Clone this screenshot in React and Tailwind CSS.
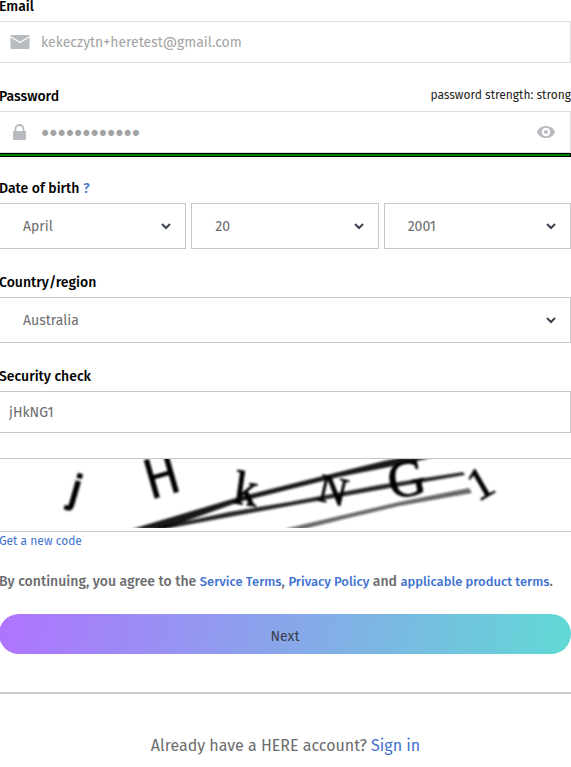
const labelText = "text-[14px] leading-5 font-medium text-black";
const linkText = "text-[#3f73d2]";

function Chevron() {
  return (
    <svg className="pointer-events-none absolute top-1/2 right-[15px] -mt-1 h-2 w-[10px]" viewBox="0 0 10 8" fill="none" aria-hidden="true">
      <path d="M1 2 L5 6 L9 2" stroke="#3b4250" strokeWidth="2" />
    </svg>
  );
}

function SelectBox({ id, label, value }) {
  return (
    <div className="relative min-w-0 flex-1">
      <select
        id={id}
        aria-label={label}
        defaultValue={value}
        className="block h-[46px] w-full appearance-none border border-[#c6c8c9] bg-white pr-10 pl-[23px] text-[14px] text-[#6b6c6e]"
      >
        <option>{value}</option>
      </select>
      <Chevron />
    </div>
  );
}

function Captcha() {
  return (
    <svg className="block h-[69px] w-[571px] max-w-none" viewBox="0 0 571 69" role="img" aria-label="Security code">
      <defs>
        <filter id="soft" x="-5%" y="-10%" width="110%" height="120%">
          <feGaussianBlur stdDeviation="0.8" />
        </filter>
      </defs>
      <g filter="url(#soft)" fill="#000">
        <path d="M133 70 L240 38 L340 13 L385 2 L400 -1 L432 -1 L400 6 L340 18 L240 43 L165 70Z" opacity="0.9" />
        <path d="M150 70 L230 53 L290 43 L380 26 L464 13 L466 16 L385 30 L290 47 L230 58 L166 70Z" opacity="0.85" />
        <path d="M285 70 L340 57 L400 43 L470 29 L473 34 L400 47 L345 60 L305 70Z" opacity="0.6" />
        <text transform="translate(69 42) rotate(16)" fontFamily="Liberation Sans" fontSize="40" stroke="#000" strokeWidth="2">j</text>
        <text transform="translate(151 41) rotate(-16)" fontFamily="Liberation Sans Narrow, Fira Sans Condensed, Liberation Sans" fontSize="58">H</text>
        <text transform="translate(233 44) rotate(8)" fontFamily="Liberation Serif" fontSize="48" stroke="#000" strokeWidth="1">k</text>
        <text transform="translate(317 41) rotate(13)" fontFamily="Liberation Serif" fontSize="40" stroke="#000" strokeWidth="1">N</text>
        <text transform="translate(392 40) rotate(-10)" fontFamily="Liberation Serif" fontSize="52" stroke="#000" strokeWidth="1">G</text>
        <text transform="translate(479 43) rotate(-30)" fontFamily="Liberation Serif" fontSize="45" stroke="#000" strokeWidth="1">1</text>
      </g>
    </svg>
  );
}

export default function App() {
  return (
    <main className="overflow-hidden bg-white font-['Fira_Sans','Noto_Sans',sans-serif] text-[#6b6c6e]">
      <form className="-mt-[3px] -ml-px" onSubmit={(e) => e.preventDefault()}>
        <label htmlFor="email" className={`mb-1 block ${labelText}`}>Email</label>
        <div className="flex h-[42px] items-center border border-[#dddedf] pl-[10px]">
          <svg className="h-[14px] w-5 shrink-0" viewBox="0 0 20 14" aria-hidden="true">
            <rect x="0.5" width="19" height="14" rx="1" fill="#b7babf" />
            <path d="M1 2 L10 7.5 L19 2" fill="none" stroke="#fff" strokeWidth="1.2" />
          </svg>
          <input id="email" type="email" defaultValue="kekeczytn+heretest@gmail.com" className="ml-[11px] min-w-0 flex-1 text-[14px] text-[#a3a3a3] outline-none" />
        </div>

        <div className="mt-6 mb-1 flex items-start justify-between">
          <label htmlFor="password" className={labelText}>Password</label>
          <span className="text-[12px] leading-4 text-[#222]">password strength: strong</span>
        </div>
        <div className="flex h-[42px] items-center border border-[#dddedf] pr-[15px] pl-[13px]">
          <svg className="h-4 w-[14px] shrink-0" viewBox="0 0 14 16" aria-hidden="true">
            <rect y="7" width="13" height="9" rx="1" fill="#b7babf" />
            <path d="M2.5 8 V5 a4 4 0 0 1 8 0 V8" fill="none" stroke="#b7babf" strokeWidth="1.8" />
          </svg>
          <input id="password" type="password" defaultValue="abcdefghijkl" className="ml-[14px] min-w-0 flex-1 pt-[2px] font-['DejaVu_Sans',sans-serif] text-[14px] text-[#a3a3a3] outline-none [-webkit-text-stroke:2px_#a3a3a3]" />
          <button type="button" aria-label="Show password">
            <svg className="h-3 w-[18px]" viewBox="0 0 18 12" aria-hidden="true">
              <path d="M0 6 C3 -2 15 -2 18 6 C15 14 3 14 0 6Z" fill="#b7babf" />
              <circle cx="9" cy="6" r="4.2" fill="#fff" />
              <circle cx="9" cy="6" r="2" fill="#b7babf" />
            </svg>
          </button>
        </div>
        <div className="h-1 border border-black bg-[#008000]" />

        <div className={`mt-[22px] mb-1 ${labelText}`}>
          <label htmlFor="month">Date of birth</label> <a href="#dob" className={linkText}>?</a>
        </div>
        <div className="flex gap-[5px]">
          <SelectBox id="month" label="Month" value="April" />
          <SelectBox id="day" label="Day" value="20" />
          <SelectBox id="year" label="Year" value="2001" />
        </div>

        <label htmlFor="country" className={`mt-6 mb-1 block ${labelText}`}>Country/region</label>
        <div className="flex">
          <SelectBox id="country" label="Country/region" value="Australia" />
        </div>

        <label htmlFor="code" className={`mt-6 mb-1 block ${labelText}`}>Security check</label>
        <input id="code" type="text" defaultValue="jHkNG1" className="block h-[42px] w-full border border-[#c6c8c9] px-[9px] text-[14px] text-[#6b6c6e]" />

        <div className="mt-[25px] h-[74px] overflow-hidden border-y border-[#c6c8c9]">
          <Captcha />
        </div>
        <a href="#new-code" className={`block text-[12px] leading-[18px] ${linkText}`}>Get a new code</a>

        <p className="mt-[22px] text-[14px] leading-5 font-medium">
          By continuing, you agree to the{" "}
          <a href="#service" className={`text-[13px] ${linkText}`}>Service Terms</a>,{" "}
          <a href="#privacy" className={`text-[13px] ${linkText}`}>Privacy Policy</a> and{" "}
          <a href="#terms" className={`text-[13px] ${linkText}`}>applicable product terms</a>.
        </p>

        <button type="submit" className="mt-[22px] block h-10 w-full rounded-full bg-[linear-gradient(100deg,#af73ff,#61d9d5)] pt-1 text-[14px] text-[#383c45]">
          Next
        </button>
      </form>

      <hr className="mt-[38px] border-t-2 border-[#cfcfcf]" />
      <p className="mt-10 pb-2 text-center text-[16px] leading-6">
        Already have a HERE account? <a href="#sign-in" className={linkText}>Sign in</a>
      </p>
    </main>
  );
}
